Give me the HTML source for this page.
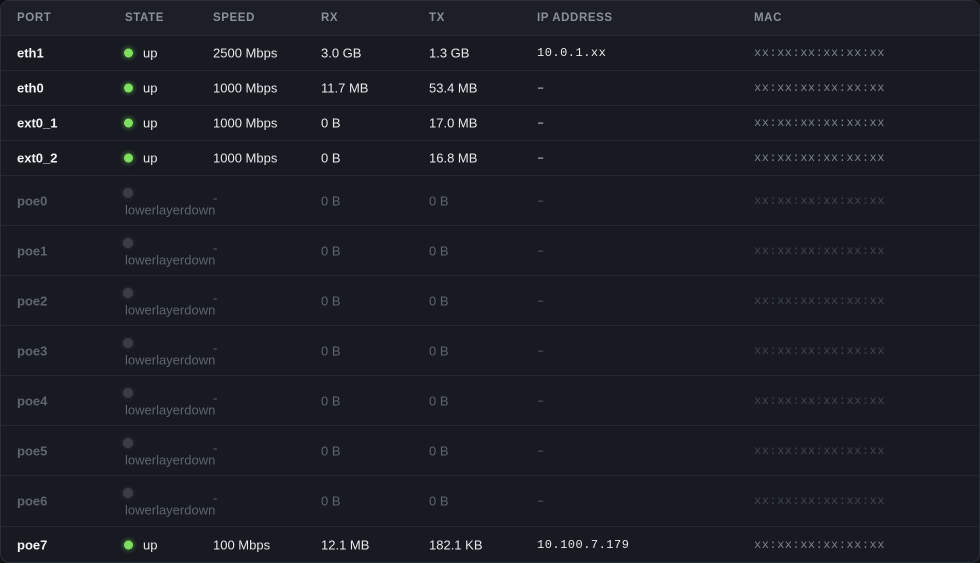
<!DOCTYPE html>
<html><head><meta charset="utf-8"><style>
*{margin:0;padding:0;box-sizing:border-box}
body{width:980px;height:563px;background:#0f1115;font-family:"Liberation Sans",sans-serif;overflow:hidden}
.card{position:absolute;left:0;top:0;width:980px;height:563px;background:#171a21;border:1px solid #2a2e37;border-radius:9px;overflow:hidden}
.in{position:absolute;left:-1px;top:1px;width:980px;height:563px}
.hdr{position:absolute;left:0;top:-2px;width:100%;height:36px;background:#1c1f27;border-bottom:1px solid #262a32}
.row{position:absolute;left:0;width:100%;border-bottom:1px solid #242831}
.c{position:absolute;white-space:nowrap;font-size:13px;color:#e6e8ec;transform:translateY(-50%)}
.h{font-size:11.5px;font-weight:bold;color:#8b9099;letter-spacing:.6px}
.p{font-weight:bold;color:#f2f3f5}
.m{font-family:"Liberation Mono",monospace;font-size:12px;letter-spacing:.5px}
.mac{color:#7b8089}
.dot{position:absolute;width:9px;height:9px;border-radius:50%;background:#7ee05e;box-shadow:0 0 5px 1px rgba(126,224,94,.45);transform:translateY(-50%)}
.dn .c{color:#5f646d}
.dn .p{color:#5f646d}
.dn .mac{color:#3f434b}
.dn .dot{background:#3a3d44;box-shadow:0 0 4px 1px rgba(70,72,80,.4);width:10px;height:10px}
</style></head><body><div class="card"><div class="in">
<div class="hdr">
<div class="c h" style="left:17px;top:18px">PORT</div>
<div class="c h" style="left:125px;top:18px">STATE</div>
<div class="c h" style="left:213px;top:18px">SPEED</div>
<div class="c h" style="left:321px;top:18px">RX</div>
<div class="c h" style="left:429px;top:18px">TX</div>
<div class="c h" style="left:537px;top:18px">IP ADDRESS</div>
<div class="c h" style="left:754px;top:18px">MAC</div>
</div>

<div class="row" style="top:34px;height:35px">
<div class="c p" style="left:17px;top:17px">eth1</div><div class="dot" style="left:124px;top:17px"></div><div class="c" style="left:143px;top:17px">up</div><div class="c" style="left:213px;top:17px">2500 Mbps</div><div class="c" style="left:321px;top:17px">3.0 GB</div><div class="c" style="left:429px;top:17px">1.3 GB</div><div class="c m" style="left:537px;top:17px">10.0.1.xx</div><div class="c m mac" style="left:754px;top:17px">xx:xx:xx:xx:xx:xx</div></div>
<div class="row" style="top:69px;height:35px">
<div class="c p" style="left:17px;top:17px">eth0</div><div class="dot" style="left:124px;top:17px"></div><div class="c" style="left:143px;top:17px">up</div><div class="c" style="left:213px;top:17px">1000 Mbps</div><div class="c" style="left:321px;top:17px">11.7 MB</div><div class="c" style="left:429px;top:17px">53.4 MB</div><div class="c m" style="left:537px;top:17px">–</div><div class="c m mac" style="left:754px;top:17px">xx:xx:xx:xx:xx:xx</div></div>
<div class="row" style="top:104px;height:35px">
<div class="c p" style="left:17px;top:17px">ext0_1</div><div class="dot" style="left:124px;top:17px"></div><div class="c" style="left:143px;top:17px">up</div><div class="c" style="left:213px;top:17px">1000 Mbps</div><div class="c" style="left:321px;top:17px">0 B</div><div class="c" style="left:429px;top:17px">17.0 MB</div><div class="c m" style="left:537px;top:17px">–</div><div class="c m mac" style="left:754px;top:17px">xx:xx:xx:xx:xx:xx</div></div>
<div class="row" style="top:139px;height:35px">
<div class="c p" style="left:17px;top:17px">ext0_2</div><div class="dot" style="left:124px;top:17px"></div><div class="c" style="left:143px;top:17px">up</div><div class="c" style="left:213px;top:17px">1000 Mbps</div><div class="c" style="left:321px;top:17px">0 B</div><div class="c" style="left:429px;top:17px">16.8 MB</div><div class="c m" style="left:537px;top:17px">–</div><div class="c m mac" style="left:754px;top:17px">xx:xx:xx:xx:xx:xx</div></div>

<div class="row dn" style="top:174px;height:50px"><div class="c p" style="left:17px;top:25px">poe0</div><div class="dot" style="left:123px;top:17px"></div><div class="c" style="left:125px;top:34px">lowerlayerdown</div><div class="c" style="left:213px;top:22px">-</div><div class="c" style="left:321px;top:25px">0 B</div><div class="c" style="left:429px;top:25px">0 B</div><div class="c m" style="left:537px;top:25px">–</div><div class="c m mac" style="left:754px;top:25px">xx:xx:xx:xx:xx:xx</div></div>
<div class="row dn" style="top:224px;height:50px"><div class="c p" style="left:17px;top:25px">poe1</div><div class="dot" style="left:123px;top:17px"></div><div class="c" style="left:125px;top:34px">lowerlayerdown</div><div class="c" style="left:213px;top:22px">-</div><div class="c" style="left:321px;top:25px">0 B</div><div class="c" style="left:429px;top:25px">0 B</div><div class="c m" style="left:537px;top:25px">–</div><div class="c m mac" style="left:754px;top:25px">xx:xx:xx:xx:xx:xx</div></div>
<div class="row dn" style="top:274px;height:50px"><div class="c p" style="left:17px;top:25px">poe2</div><div class="dot" style="left:123px;top:17px"></div><div class="c" style="left:125px;top:34px">lowerlayerdown</div><div class="c" style="left:213px;top:22px">-</div><div class="c" style="left:321px;top:25px">0 B</div><div class="c" style="left:429px;top:25px">0 B</div><div class="c m" style="left:537px;top:25px">–</div><div class="c m mac" style="left:754px;top:25px">xx:xx:xx:xx:xx:xx</div></div>
<div class="row dn" style="top:324px;height:50px"><div class="c p" style="left:17px;top:25px">poe3</div><div class="dot" style="left:123px;top:17px"></div><div class="c" style="left:125px;top:34px">lowerlayerdown</div><div class="c" style="left:213px;top:22px">-</div><div class="c" style="left:321px;top:25px">0 B</div><div class="c" style="left:429px;top:25px">0 B</div><div class="c m" style="left:537px;top:25px">–</div><div class="c m mac" style="left:754px;top:25px">xx:xx:xx:xx:xx:xx</div></div>
<div class="row dn" style="top:374px;height:50px"><div class="c p" style="left:17px;top:25px">poe4</div><div class="dot" style="left:123px;top:17px"></div><div class="c" style="left:125px;top:34px">lowerlayerdown</div><div class="c" style="left:213px;top:22px">-</div><div class="c" style="left:321px;top:25px">0 B</div><div class="c" style="left:429px;top:25px">0 B</div><div class="c m" style="left:537px;top:25px">–</div><div class="c m mac" style="left:754px;top:25px">xx:xx:xx:xx:xx:xx</div></div>
<div class="row dn" style="top:424px;height:50px"><div class="c p" style="left:17px;top:25px">poe5</div><div class="dot" style="left:123px;top:17px"></div><div class="c" style="left:125px;top:34px">lowerlayerdown</div><div class="c" style="left:213px;top:22px">-</div><div class="c" style="left:321px;top:25px">0 B</div><div class="c" style="left:429px;top:25px">0 B</div><div class="c m" style="left:537px;top:25px">–</div><div class="c m mac" style="left:754px;top:25px">xx:xx:xx:xx:xx:xx</div></div>
<div class="row dn" style="top:474px;height:51px"><div class="c p" style="left:17px;top:25px">poe6</div><div class="dot" style="left:123px;top:17px"></div><div class="c" style="left:125px;top:34px">lowerlayerdown</div><div class="c" style="left:213px;top:22px">-</div><div class="c" style="left:321px;top:25px">0 B</div><div class="c" style="left:429px;top:25px">0 B</div><div class="c m" style="left:537px;top:25px">–</div><div class="c m mac" style="left:754px;top:25px">xx:xx:xx:xx:xx:xx</div></div>

<div class="row" style="top:525px;height:37px;border-bottom:none">
<div class="c p" style="left:17px;top:18px">poe7</div><div class="dot" style="left:124px;top:18px"></div><div class="c" style="left:143px;top:18px">up</div><div class="c" style="left:213px;top:18px">100 Mbps</div><div class="c" style="left:321px;top:18px">12.1 MB</div><div class="c" style="left:429px;top:18px">182.1 KB</div><div class="c m" style="left:537px;top:18px">10.100.7.179</div><div class="c m mac" style="left:754px;top:18px">xx:xx:xx:xx:xx:xx</div></div>
</div></div></body></html>
